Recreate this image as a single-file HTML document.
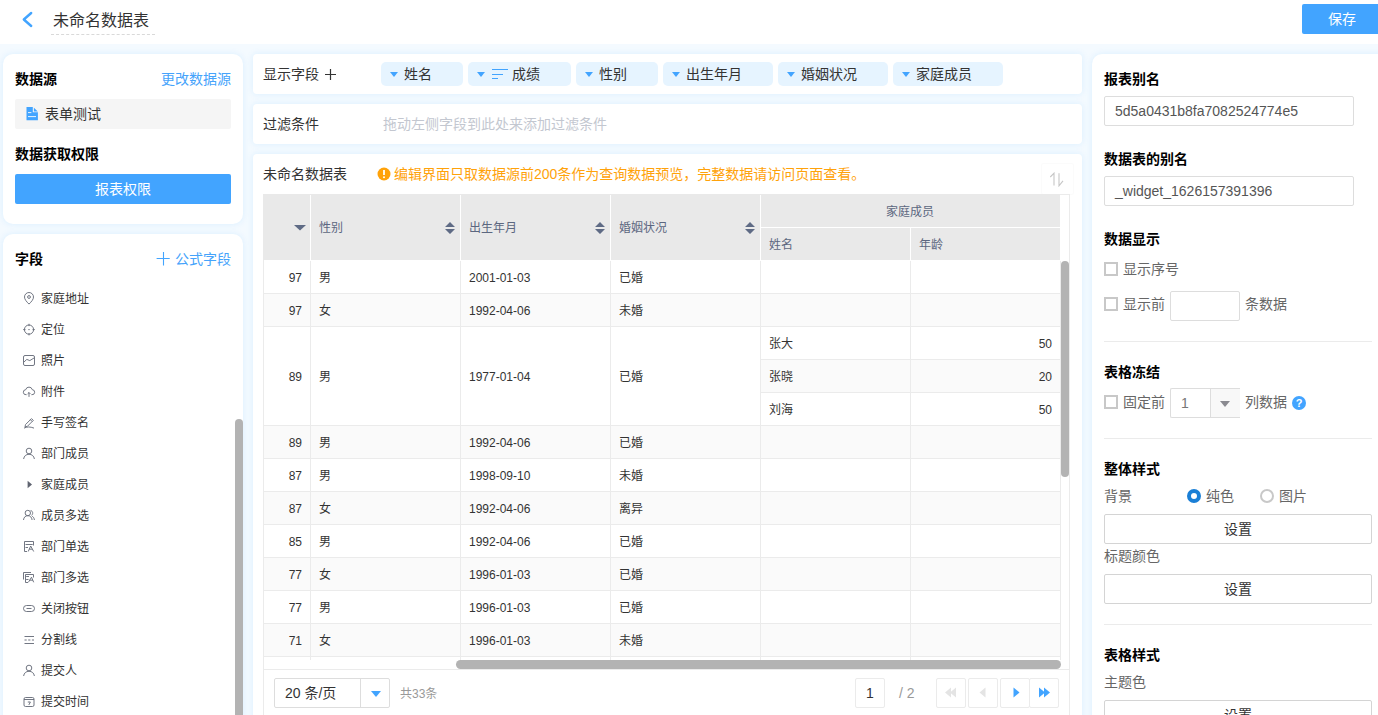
<!DOCTYPE html>
<html lang="zh-CN">
<head>
<meta charset="utf-8">
<title>未命名数据表</title>
<style>
*{box-sizing:border-box;margin:0;padding:0}
html,body{width:1378px;height:715px;overflow:hidden}
body{background:#f4faff;font-family:"Liberation Sans","Noto Sans CJK SC",sans-serif;font-size:14px;color:#333;position:relative}
.abs{position:absolute}
.t{position:absolute;white-space:nowrap;line-height:20px;height:20px}
.b{font-weight:bold;color:#000}
.g{color:#666}
.blue{color:#45a3fb}
.panel{position:absolute;background:#fff;box-shadow:0 0 6px rgba(214,237,255,.9)}
#hdr{left:0;top:0;width:1378px;height:44px;background:#fff;position:absolute}
.btn{position:absolute;background:#42a4ff;color:#fff;text-align:center;border-radius:2px}
.inp{position:absolute;border:1px solid #ddd;border-radius:2px;background:#fff;font-size:14px;color:#555;line-height:28px;padding-left:10px;white-space:nowrap}
.tag{position:absolute;top:62px;height:24px;background:#e6f4ff;border-radius:5px}
.tag i{position:absolute;left:9px;top:10px;width:0;height:0;border-left:4.5px solid transparent;border-right:4.5px solid transparent;border-top:5px solid #42a4ff}
.tag span{position:absolute;top:2px;line-height:20px;white-space:nowrap;font-size:14px;color:#333}
.fi{position:absolute;left:41px;font-size:12px;line-height:16px;height:16px;color:#333;white-space:nowrap}
.ic{position:absolute;left:23px;width:12px;height:13px;overflow:visible}
.ic *{fill:none;stroke:#626875;stroke-width:.9}
.cell{position:absolute;font-size:12px;line-height:16px;height:16px;color:#333;white-space:nowrap}
.th{position:absolute;font-size:12px;line-height:16px;height:16px;color:#5c6780;white-space:nowrap}
.vl{position:absolute;width:1px;background:#ebebeb}
.hl{position:absolute;height:1px;background:#ebebeb}
.cb{position:absolute;width:14px;height:14px;border:2px solid #c8c8c8;background:#fff;left:1104px}
.sbtn{position:absolute;left:1104px;width:268px;height:30px;border:1px solid #d4d4d4;border-radius:2px;background:#fff;text-align:center;line-height:28px;font-size:14px;color:#333}
.pb{position:absolute;top:678px;width:30px;height:30px;border:1px solid #ebebeb;border-radius:2px;background:#fff}
</style>
</head>
<body>
<div id="hdr">
<svg class="abs" style="left:21px;top:11px" width="14" height="18" viewBox="0 0 14 18"><path d="M10.2 2 L2.8 8.5 L10.2 15" fill="none" stroke="#42a4ff" stroke-width="2.4" stroke-linecap="round" stroke-linejoin="round"/></svg>
<div class="t" style="left:53px;top:11px;font-size:16px;color:#333">未命名数据表</div>
<div class="abs" style="left:51px;top:34px;width:104px;border-top:1px dashed #d9d9d9"></div>
<div class="btn" style="left:1302px;top:4px;width:80px;height:30px;line-height:30px;font-size:14px">保存</div>
</div>
<div class="panel" style="left:3px;top:54px;width:240px;height:170px;border-radius:10px"></div>
<div class="t b" style="left:15px;top:69px">数据源</div>
<div class="t blue" style="left:161px;top:69px">更改数据源</div>
<div class="abs" style="left:15px;top:99px;width:216px;height:30px;background:#f5f5f5;border-radius:2px"></div>
<svg class="abs" style="left:26px;top:107px" width="12" height="14" viewBox="0 0 12 14"><path d="M0.5 0H6.8V5.3H11.9V13.2H0.5z" fill="#42a4ff"/><path d="M7.9 0.7L11.8 4.6H7.9z" fill="#42a4ff"/><path d="M2 5.6H5.4M2 9.6H10" stroke="#eaf4fd" stroke-width="1" fill="none"/></svg>
<div class="t" style="left:45px;top:104px">表单测试</div>
<div class="t b" style="left:15px;top:144px">数据获取权限</div>
<div class="btn" style="left:15px;top:174px;width:216px;height:30px;line-height:30px">报表权限</div>
<div class="panel" style="left:3px;top:234px;width:240px;height:500px;border-radius:10px"></div>
<div class="t b" style="left:15px;top:249px">字段</div>
<div class="t blue" style="left:175px;top:249px">公式字段</div>
<svg class="abs" style="left:156px;top:252px" width="14" height="14" viewBox="0 0 14 14"><path d="M7.5 0V13.4M0.6 6.5H13.7" stroke="#42a4ff" stroke-width="1.1" fill="none"/></svg>
<svg class="ic" style="top:292px" viewBox="0 0 12 13"><path d="M6 12.1C3.5 9.6 1.5 7.4 1.5 5a4.5 4.5 0 0 1 9 0c0 2.4-2 4.6-4.5 7.1z"/><circle cx="6" cy="5" r="1.4"/></svg><div class="fi" style="top:290.5px">家庭地址</div>
<svg class="ic" style="top:323px" viewBox="0 0 12 13"><circle cx="6" cy="6.6" r="4.6"/><path d="M6 0.8v2.3M6 10.1v2.3M0.2 6.6h2.3M9.5 6.6h2.3M5.3 6.6h1.4"/></svg><div class="fi" style="top:321.5px">定位</div>
<svg class="ic" style="top:354px" viewBox="0 0 12 13"><rect x="0.5" y="1.5" width="11" height="10" rx="1.5"/><path d="M1 8l2.8-2.6 3 1.2 4.2-2.6"/></svg><div class="fi" style="top:352.5px">照片</div>
<svg class="ic" style="top:385px" viewBox="0 0 12 13"><path d="M3.6 9.7H3a2.5 2.5 0 0 1-.300-5 3.4 3.4 0 0 1 6.6 0 2.5 2.5 0 0 1-.300 5H8.4"/><path d="M6 11.9V7.5M4.6 8.9L6 7.5l1.4 1.4"/></svg><div class="fi" style="top:383.5px">附件</div>
<svg class="ic" style="top:416px" viewBox="0 0 12 13"><path d="M2.5 8.6L8.5 2.6l1.8 1.8L4.3 10.4 2 10.9z"/><path d="M7.4 3.7l1.8 1.8"/><path d="M1 12.1c3-1.5 6-1.5 10 0"/></svg><div class="fi" style="top:414.5px">手写签名</div>
<svg class="ic" style="top:447px" viewBox="0 0 12 13"><circle cx="6" cy="4" r="2.8"/><path d="M0.6 12c0.5-3 2.4-4.7 5.4-4.7s4.9 1.7 5.4 4.7"/></svg><div class="fi" style="top:445.5px">部门成员</div>
<svg class="ic" style="top:478px" viewBox="0 0 12 13"><path d="M4.6 2.7l4.4 3.8-4.4 3.8z" style="fill:#5f6470;stroke:none"/></svg><div class="fi" style="top:476.5px">家庭成员</div>
<svg class="ic" style="top:509px" viewBox="0 0 12 13"><circle cx="4.8" cy="4" r="2.7"/><path d="M0.5 11c0.3-2.8 1.9-4.3 4.3-4.3s4 1.5 4.3 4.3"/><path d="M7.6 1.5c2.4 0.4 2.8 3.6 0.9 4.9M9.2 7.2c1.3 0.8 2 2 2.2 3.8"/></svg><div class="fi" style="top:507.5px">成员多选</div>
<svg class="ic" style="top:540px" viewBox="0 0 12 13"><path d="M10.5 5.5V1.5H1.5V11.5H4"/><path d="M2.5 4.5H9.7M2.5 7.5H5"/><path d="M5.2 11.5L7.7 6L10.7 11.5M6.4 9.2H9.4"/></svg><div class="fi" style="top:538.5px">部门单选</div>
<svg class="ic" style="top:571px" viewBox="0 0 12 13"><path d="M8 1.5H0.5V8.5"/><path d="M10.5 6.5V3.5H2.5V11.5H5"/><path d="M3.2 5.5H6M3.2 8.5H5.5"/><path d="M5.4 11.3L8.5 6.2L10.7 11.3M6.6 9.2H9.8"/></svg><div class="fi" style="top:569.5px">部门多选</div>
<svg class="ic" style="top:602px" viewBox="0 0 12 13"><rect x="0.5" y="3.5" width="11" height="6" rx="3"/><path d="M3.5 6.5h5"/></svg><div class="fi" style="top:600.5px">关闭按钮</div>
<svg class="ic" style="top:633px" viewBox="0 0 12 13"><path d="M1.5 3.5h9.5M1.5 10.5h9.5"/><path d="M1.5 7h9.5" stroke-dasharray="2.2 1.5"/></svg><div class="fi" style="top:631.5px">分割线</div>
<svg class="ic" style="top:664px" viewBox="0 0 12 13"><circle cx="6" cy="4" r="2.8"/><path d="M0.6 12c0.5-3 2.4-4.7 5.4-4.7s4.9 1.7 5.4 4.7"/></svg><div class="fi" style="top:662.5px">提交人</div>
<svg class="ic" style="top:695px" viewBox="0 0 12 13"><rect x="1" y="2.5" width="10" height="9" rx="1.5"/><path d="M1 4.5h10"/><path d="M4.8 7h2.6l-1.6 3"/></svg><div class="fi" style="top:693.5px">提交时间</div>
<div class="abs" style="left:235px;top:419px;width:8px;height:320px;background:#b3b3b3;border-radius:4px"></div>
<div class="panel" style="left:253px;top:54px;width:829px;height:40px;border-radius:4px"></div>
<div class="t" style="left:263px;top:64px">显示字段</div>
<svg class="abs" style="left:325px;top:69px" width="11" height="11" viewBox="0 0 11 11"><path d="M5.5 0v11M0 5.5h11" stroke="#333" stroke-width="1.2" fill="none"/></svg>
<div class="tag" style="left:381px;width:82px"><i></i><span style="left:23px">姓名</span></div>
<div class="tag" style="left:468px;width:103px"><i></i><svg class="abs" style="left:24px;top:6px" width="17" height="12" viewBox="0 0 17 12"><path d="M0 1.5h16M0 6.5h11M0 10.5h6" stroke="#42a4ff" stroke-width="1"/></svg><span style="left:44px">成绩</span></div>
<div class="tag" style="left:576px;width:82px"><i></i><span style="left:23px">性别</span></div>
<div class="tag" style="left:663px;width:110px"><i></i><span style="left:23px">出生年月</span></div>
<div class="tag" style="left:778px;width:110px"><i></i><span style="left:23px">婚姻状况</span></div>
<div class="tag" style="left:893px;width:110px"><i></i><span style="left:23px">家庭成员</span></div>
<div class="panel" style="left:253px;top:104px;width:829px;height:40px;border-radius:4px"></div>
<div class="t" style="left:263px;top:114px">过滤条件</div>
<div class="t" style="left:383px;top:114px;color:#c3c7d0">拖动左侧字段到此处来添加过滤条件</div>
<div class="panel" style="left:253px;top:154px;width:829px;height:580px;border-radius:4px"></div>
<div class="t" style="left:263px;top:164px">未命名数据表</div>
<svg class="abs" style="left:377px;top:167px" width="14" height="14" viewBox="0 0 14 14"><circle cx="7" cy="7" r="6.5" fill="#ffa20a"/><path d="M7 3v5" stroke="#fff" stroke-width="1.8"/><circle cx="7" cy="10.3" r="1" fill="#fff"/></svg>
<div class="t" style="left:394px;top:164px;color:#ffa20a">编辑界面只取数据源前200条作为查询数据预览，完整数据请访问页面查看。</div>
<div class="abs" style="left:1042px;top:164px;width:31px;height:30px;background:#fff;box-shadow:0 0 2px rgba(0,0,0,.07);border-radius:1px"></div>
<svg class="abs" style="left:1049px;top:172px" width="16" height="15" viewBox="0 0 16 15"><path d="M1.3 5L5 1.2V13.5M10 1.2V13.8L14 8.8" fill="none" stroke="#c6c6c6" stroke-width="1.1"/></svg>
<div class="abs" style="left:263px;top:194px;width:807px;height:540px;border:1px solid #ebebeb;background:#fff"></div>
<div class="abs" style="left:263px;top:194px;width:797px;height:66px;background:#e9e9e9"></div>
<div class="abs" style="left:310px;top:195px;width:1px;height:65px;background:#fff"></div>
<div class="abs" style="left:460px;top:195px;width:1px;height:65px;background:#fff"></div>
<div class="abs" style="left:610px;top:195px;width:1px;height:65px;background:#fff"></div>
<div class="abs" style="left:760px;top:195px;width:1px;height:65px;background:#fff"></div>
<div class="abs" style="left:910px;top:228px;width:1px;height:32px;background:#fff"></div>
<div class="abs" style="left:761px;top:227px;width:299px;height:1px;background:#fff"></div>
<svg class="abs" style="left:294px;top:225px" width="12" height="6" viewBox="0 0 12 6"><path d="M0 0h12L6 5.5z" fill="#5f6b85"/></svg>
<div class="th" style="left:319px;top:220px">性别</div>
<svg class="abs" style="left:445px;top:222px" width="10" height="12" viewBox="0 0 10 12"><path d="M0 5L5 0l5 5zM0 7l5 5 5-5z" fill="#5f6b85"/></svg>
<div class="th" style="left:469px;top:220px">出生年月</div>
<svg class="abs" style="left:595px;top:222px" width="10" height="12" viewBox="0 0 10 12"><path d="M0 5L5 0l5 5zM0 7l5 5 5-5z" fill="#5f6b85"/></svg>
<div class="th" style="left:619px;top:220px">婚姻状况</div>
<svg class="abs" style="left:745px;top:222px" width="10" height="12" viewBox="0 0 10 12"><path d="M0 5L5 0l5 5zM0 7l5 5 5-5z" fill="#5f6b85"/></svg>
<div class="th" style="left:886px;top:204px">家庭成员</div>
<div class="th" style="left:769px;top:237px">姓名</div>
<div class="th" style="left:919px;top:237px">年龄</div>
<div class="cell" style="left:270px;width:32px;text-align:right;top:270px">97</div><div class="cell" style="left:319px;top:270px">男</div><div class="cell" style="left:469px;top:270px">2001-01-03</div><div class="cell" style="left:619px;top:270px">已婚</div>
<div class="hl" style="left:264px;top:293px;width:796px"></div>
<div class="abs" style="left:264px;top:294px;width:796px;height:32px;background:#fafafa"></div>
<div class="cell" style="left:270px;width:32px;text-align:right;top:303px">97</div><div class="cell" style="left:319px;top:303px">女</div><div class="cell" style="left:469px;top:303px">1992-04-06</div><div class="cell" style="left:619px;top:303px">未婚</div>
<div class="hl" style="left:264px;top:326px;width:796px"></div>
<div class="cell" style="left:769px;top:336px">张大</div><div class="cell" style="left:1000px;width:52px;text-align:right;top:336px">50</div>
<div class="abs" style="left:761px;top:360px;width:299px;height:32px;background:#fafafa"></div>
<div class="hl" style="left:761px;top:359px;width:299px"></div>
<div class="cell" style="left:769px;top:369px">张晓</div><div class="cell" style="left:1000px;width:52px;text-align:right;top:369px">20</div>
<div class="hl" style="left:761px;top:392px;width:299px"></div>
<div class="cell" style="left:769px;top:402px">刘海</div><div class="cell" style="left:1000px;width:52px;text-align:right;top:402px">50</div>
<div class="cell" style="left:270px;width:32px;text-align:right;top:369px">89</div><div class="cell" style="left:319px;top:369px">男</div><div class="cell" style="left:469px;top:369px">1977-01-04</div><div class="cell" style="left:619px;top:369px">已婚</div>
<div class="hl" style="left:264px;top:425px;width:796px"></div>
<div class="abs" style="left:264px;top:426px;width:796px;height:32px;background:#fafafa"></div>
<div class="cell" style="left:270px;width:32px;text-align:right;top:435px">89</div><div class="cell" style="left:319px;top:435px">男</div><div class="cell" style="left:469px;top:435px">1992-04-06</div><div class="cell" style="left:619px;top:435px">已婚</div>
<div class="hl" style="left:264px;top:458px;width:796px"></div>
<div class="cell" style="left:270px;width:32px;text-align:right;top:468px">87</div><div class="cell" style="left:319px;top:468px">男</div><div class="cell" style="left:469px;top:468px">1998-09-10</div><div class="cell" style="left:619px;top:468px">未婚</div>
<div class="hl" style="left:264px;top:491px;width:796px"></div>
<div class="abs" style="left:264px;top:492px;width:796px;height:32px;background:#fafafa"></div>
<div class="cell" style="left:270px;width:32px;text-align:right;top:501px">87</div><div class="cell" style="left:319px;top:501px">女</div><div class="cell" style="left:469px;top:501px">1992-04-06</div><div class="cell" style="left:619px;top:501px">离异</div>
<div class="hl" style="left:264px;top:524px;width:796px"></div>
<div class="cell" style="left:270px;width:32px;text-align:right;top:534px">85</div><div class="cell" style="left:319px;top:534px">男</div><div class="cell" style="left:469px;top:534px">1992-04-06</div><div class="cell" style="left:619px;top:534px">已婚</div>
<div class="hl" style="left:264px;top:557px;width:796px"></div>
<div class="abs" style="left:264px;top:558px;width:796px;height:32px;background:#fafafa"></div>
<div class="cell" style="left:270px;width:32px;text-align:right;top:567px">77</div><div class="cell" style="left:319px;top:567px">女</div><div class="cell" style="left:469px;top:567px">1996-01-03</div><div class="cell" style="left:619px;top:567px">已婚</div>
<div class="hl" style="left:264px;top:590px;width:796px"></div>
<div class="cell" style="left:270px;width:32px;text-align:right;top:600px">77</div><div class="cell" style="left:319px;top:600px">男</div><div class="cell" style="left:469px;top:600px">1996-01-03</div><div class="cell" style="left:619px;top:600px">已婚</div>
<div class="hl" style="left:264px;top:623px;width:796px"></div>
<div class="abs" style="left:264px;top:624px;width:796px;height:32px;background:#fafafa"></div>
<div class="cell" style="left:270px;width:32px;text-align:right;top:633px">71</div><div class="cell" style="left:319px;top:633px">女</div><div class="cell" style="left:469px;top:633px">1996-01-03</div><div class="cell" style="left:619px;top:633px">未婚</div>
<div class="hl" style="left:264px;top:656px;width:796px"></div>
<div class="vl" style="left:310px;top:261px;height:399px"></div>
<div class="vl" style="left:460px;top:261px;height:399px"></div>
<div class="vl" style="left:610px;top:261px;height:399px"></div>
<div class="vl" style="left:760px;top:261px;height:399px"></div>
<div class="vl" style="left:910px;top:261px;height:399px"></div>
<div class="vl" style="left:1060px;top:261px;height:399px"></div>
<div class="abs" style="left:1061px;top:261px;width:8px;height:216px;background:#b3b3b3;border-radius:4px"></div>
<div class="abs" style="left:264px;top:660px;width:805px;height:9px;background:#fff"></div>
<div class="abs" style="left:456px;top:660px;width:605px;height:9px;background:#b3b3b3;border-radius:4.5px"></div>
<div class="hl" style="left:264px;top:669px;width:805px"></div>
<div class="abs" style="left:274px;top:678px;width:116px;height:30px;border:1px solid #ddd;border-radius:2px;background:#fff"></div>
<div class="vl" style="left:360px;top:679px;height:28px;background:#ddd"></div>
<div class="t" style="left:285px;top:683px;color:#333">20 条/页</div>
<svg class="abs" style="left:371px;top:691px" width="10" height="6" viewBox="0 0 10 6"><path d="M0 0h10L5 6z" fill="#42a4ff"/></svg>
<div class="t" style="left:400px;top:684px;font-size:12px;color:#999">共33条</div>
<div class="abs" style="left:855px;top:678px;width:30px;height:30px;border:1px solid #ebebeb;border-radius:2px;background:#fff"></div>
<div class="t" style="left:866px;top:683px;color:#333">1</div>
<div class="t" style="left:899px;top:683px;color:#999">/ 2</div>
<div class="pb" style="left:936px"></div><div class="pb" style="left:968px"></div><div class="pb" style="left:1000px"></div><div class="pb" style="left:1029px"></div>
<svg class="abs" style="left:945px;top:687px" width="11" height="11" viewBox="0 0 11 11"><path d="M6 0.5v10L0 5.5zM11 0.5v10L5 5.5z" fill="#e4e4e4"/></svg>
<svg class="abs" style="left:979px;top:687px" width="7" height="11" viewBox="0 0 7 11"><path d="M6.5 0.5v10L0.5 5.5z" fill="#e4e4e4"/></svg>
<svg class="abs" style="left:1013px;top:687px" width="7" height="11" viewBox="0 0 7 11"><path d="M0.5 0.5v10L6.5 5.5z" fill="#42a4ff"/></svg>
<svg class="abs" style="left:1039px;top:687px" width="11" height="11" viewBox="0 0 11 11"><path d="M0 0.5v10L6 5.5zM5 0.5v10L11 5.5z" fill="#42a4ff"/></svg>
<div class="panel" style="left:1092px;top:54px;width:300px;height:700px;border-radius:10px"></div>
<div class="t b" style="left:1104px;top:69px">报表别名</div>
<div class="inp" style="left:1104px;top:96px;width:250px;height:30px">5d5a0431b8fa7082524774e5</div>
<div class="t b" style="left:1104px;top:149px">数据表的别名</div>
<div class="inp" style="left:1104px;top:176px;width:250px;height:30px">_widget_1626157391396</div>
<div class="t b" style="left:1104px;top:229px">数据显示</div>
<div class="cb" style="top:262px"></div><div class="t g" style="left:1123px;top:259px">显示序号</div>
<div class="cb" style="top:297px"></div><div class="t g" style="left:1123px;top:294px">显示前</div>
<div class="inp" style="left:1170px;top:291px;width:70px;height:30px"></div>
<div class="t g" style="left:1245px;top:294px">条数据</div>
<div class="hl" style="left:1104px;top:341px;width:268px"></div>
<div class="t b" style="left:1104px;top:362px">表格冻结</div>
<div class="cb" style="top:395px"></div><div class="t g" style="left:1123px;top:392px">固定前</div>
<div class="abs" style="left:1170px;top:388px;width:70px;height:30px;border:1px solid #ddd;border-right:0;border-radius:2px 0 0 2px;background:#fff"></div>
<div class="abs" style="left:1210px;top:389px;width:30px;height:28px;border-left:1px solid #ddd;background:#f8f8f8"></div>
<div class="t" style="left:1181px;top:393px;color:#777">1</div>
<svg class="abs" style="left:1220px;top:401px" width="10" height="6" viewBox="0 0 10 6"><path d="M0 0h10L5 6z" fill="#8a8a90"/></svg>
<div class="t g" style="left:1245px;top:392px">列数据</div>
<svg class="abs" style="left:1292px;top:396px" width="14" height="14" viewBox="0 0 14 14"><circle cx="7" cy="7" r="7" fill="#42a4ff"/><text x="7" y="11" text-anchor="middle" font-family="Liberation Sans, sans-serif" font-size="11" font-weight="bold" fill="#fff">?</text></svg>
<div class="hl" style="left:1104px;top:438px;width:268px"></div>
<div class="t b" style="left:1104px;top:459px">整体样式</div>
<div class="t g" style="left:1104px;top:486px">背景</div>
<div class="abs" style="left:1187px;top:489px;width:14px;height:14px;border-radius:7px;border:4px solid #1a7fd6;background:#fff"></div>
<div class="t g" style="left:1206px;top:486px">纯色</div>
<div class="abs" style="left:1260px;top:489px;width:14px;height:14px;border-radius:7px;border:2px solid #c8c8c8;background:#fff"></div>
<div class="t g" style="left:1279px;top:486px">图片</div>
<div class="sbtn" style="top:514px">设置</div>
<div class="t g" style="left:1104px;top:546px">标题颜色</div>
<div class="sbtn" style="top:574px">设置</div>
<div class="hl" style="left:1104px;top:624px;width:268px"></div>
<div class="t b" style="left:1104px;top:645px">表格样式</div>
<div class="t g" style="left:1104px;top:672px">主题色</div>
<div class="sbtn" style="top:700px">设置</div>
</body>
</html>
